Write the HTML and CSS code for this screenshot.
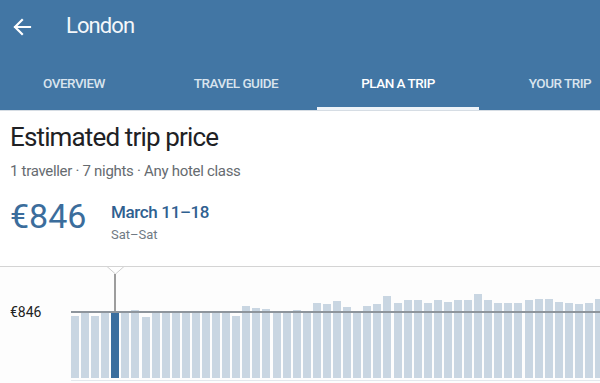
FILE: index.html
```html
<!DOCTYPE html>
<html>
<head>
<meta charset="utf-8">
<link rel="stylesheet" href="styles.css">
</head>
<body>
<header class="appbar">
  <div class="topbar">
    <svg class="back" width="20" height="20" viewBox="0 0 20 20"><path d="M18 10H3M10 3L3 10L10 17" fill="none" stroke="#fff" stroke-width="2.2" stroke-linecap="square"/></svg>
    <span class="city">London</span>
  </div>
  <nav class="tabs">
    <div class="tab">OVERVIEW</div>
    <div class="tab">TRAVEL GUIDE</div>
    <div class="tab active">PLAN A TRIP</div>
    <div class="tab">YOUR TRIP</div>
  </nav>
</header>
<main class="content">
  <h1 class="title">Estimated trip price</h1>
  <p class="sub">1 traveller · 7 nights · Any hotel class</p>
  <div class="price-row">
    <div class="price">€846</div>
    <div class="dates">
      <div class="range">March 11–18</div>
      <div class="days">Sat–Sat</div>
    </div>
  </div>
</main>
<section class="chart">
  <svg class="notch" width="18" height="9" viewBox="0 0 18 9"><polyline points="0,0.5 8.5,8 17,0.5" fill="#fff" stroke="#cfcfcf" stroke-width="1"/></svg>
  <div class="pointer"></div>
  <div class="label">€846</div>
  <div class="bars">
    <div class="bar" style="height:62px"></div>
    <div class="bar" style="height:66px"></div>
    <div class="bar" style="height:62px"></div>
    <div class="bar" style="height:66px"></div>
    <div class="bar sel" style="height:66px"></div>
    <div class="bar" style="height:66px"></div>
    <div class="bar" style="height:68px"></div>
    <div class="bar" style="height:61px"></div>
    <div class="bar" style="height:66px"></div>
    <div class="bar" style="height:66px"></div>
    <div class="bar" style="height:66px"></div>
    <div class="bar" style="height:66px"></div>
    <div class="bar" style="height:66px"></div>
    <div class="bar" style="height:66px"></div>
    <div class="bar" style="height:66px"></div>
    <div class="bar" style="height:66px"></div>
    <div class="bar" style="height:62px"></div>
    <div class="bar" style="height:72px"></div>
    <div class="bar" style="height:70px"></div>
    <div class="bar" style="height:69px"></div>
    <div class="bar" style="height:66px"></div>
    <div class="bar" style="height:66px"></div>
    <div class="bar" style="height:68px"></div>
    <div class="bar" style="height:66px"></div>
    <div class="bar" style="height:75px"></div>
    <div class="bar" style="height:74px"></div>
    <div class="bar" style="height:77px"></div>
    <div class="bar" style="height:71px"></div>
    <div class="bar" style="height:66px"></div>
    <div class="bar" style="height:72px"></div>
    <div class="bar" style="height:74px"></div>
    <div class="bar" style="height:82px"></div>
    <div class="bar" style="height:75px"></div>
    <div class="bar" style="height:78px"></div>
    <div class="bar" style="height:78px"></div>
    <div class="bar" style="height:75px"></div>
    <div class="bar" style="height:78px"></div>
    <div class="bar" style="height:76px"></div>
    <div class="bar" style="height:78px"></div>
    <div class="bar" style="height:78px"></div>
    <div class="bar" style="height:84px"></div>
    <div class="bar" style="height:78px"></div>
    <div class="bar" style="height:75px"></div>
    <div class="bar" style="height:75px"></div>
    <div class="bar" style="height:75px"></div>
    <div class="bar" style="height:78px"></div>
    <div class="bar" style="height:79px"></div>
    <div class="bar" style="height:79px"></div>
    <div class="bar" style="height:76px"></div>
    <div class="bar" style="height:75px"></div>
    <div class="bar" style="height:74px"></div>
    <div class="bar" style="height:75px"></div>
    <div class="bar" style="height:79px"></div>
    <div class="priceline"></div>
  </div>
</section>
</body>
</html>
```
FILE: styles.css
```css
* { box-sizing: border-box; }
html, body { margin: 0; padding: 0; }
body {
  width: 600px;
  height: 383px;
  overflow: hidden;
  background: #fff;
  font-family: Roboto, "Noto Sans", sans-serif;
}
.appbar {
  background: #4276a4;
  height: 111px;
  border-bottom: 1px solid #d6dde4;
}
.topbar {
  height: 54px;
  display: flex;
  align-items: center;
  padding-left: 12px;
}
.back { flex: 0 0 auto; }
.city {
  margin-left: 34px;
  color: #f4f7fa;
  font-size: 22px;
  letter-spacing: -0.9px;
  margin-top: -3px;
}
.tabs {
  display: flex;
  height: 56px;
  margin-left: -7px;
  overflow: hidden;
}
.tab {
  flex: 0 0 162px;
  display: flex;
  align-items: center;
  justify-content: center;
  color: #d9e4ee;
  font-size: 13.5px;
  font-weight: 500;
  letter-spacing: -0.5px;
  border-bottom: 3px solid transparent;
  padding-top: 4px;
}
.tab.active {
  color: #fff;
  border-bottom-color: #eef3f8;
}
.content {
  padding: 0 10px;
  height: 155px;
}
.title {
  margin: 0;
  padding-top: 11px;
  font-size: 26px;
  font-weight: 400;
  line-height: 30px;
  letter-spacing: -0.85px;
  color: #202124;
}
.sub {
  margin: 10px 0 0;
  font-size: 15px;
  line-height: 18px;
  letter-spacing: -0.3px;
  color: #666b70;
}
.price-row {
  display: flex;
  align-items: flex-start;
  margin-top: 18px;
}
.price {
  font-size: 34px;
  line-height: 36px;
  color: #3b6d9c;
  width: 101px;
}
.dates { padding-top: 4px; }
.range {
  font-size: 17px;
  font-weight: 500;
  line-height: 20px;
  letter-spacing: -0.35px;
  color: #2f6090;
}
.days {
  margin-top: 5px;
  font-size: 13px;
  line-height: 16px;
  color: #707a84;
}
.chart {
  position: relative;
  height: 117px;
  overflow: hidden;
  border-top: 1px solid #d4d4d4;
  background: #fdfdfd;
  display: flex;
  align-items: flex-end;
}
.notch {
  position: absolute;
  left: 107px;
  top: -1px;
}
.pointer {
  position: absolute;
  left: 114px;
  top: 7px;
  width: 2px;
  height: 38px;
  background: #9d9d9d;
}
.label {
  position: absolute;
  left: 10px;
  top: 37px;
  font-size: 14px;
  color: #222;
}
.bars {
  position: relative;
  flex: 1 1 auto;
  min-width: 0;
  overflow: hidden;
  margin-left: 71px;
  display: flex;
  align-items: flex-end;
  gap: 2.09px;
  height: 100%;
  padding-bottom: 5px;
}
.bars::after {
  content: "";
  position: absolute;
  left: 0;
  right: 0;
  bottom: 2px;
  height: 1px;
  background: #e3e8ed;
}
.bar {
  flex: 0 0 8px;
  background: #c9d6e2;
}
.bar.sel { background: #3a6e9e; }
.priceline {
  position: absolute;
  left: 0;
  right: 0;
  top: 44px;
  height: 1.5px;
  background: #8e959c;
}
```
